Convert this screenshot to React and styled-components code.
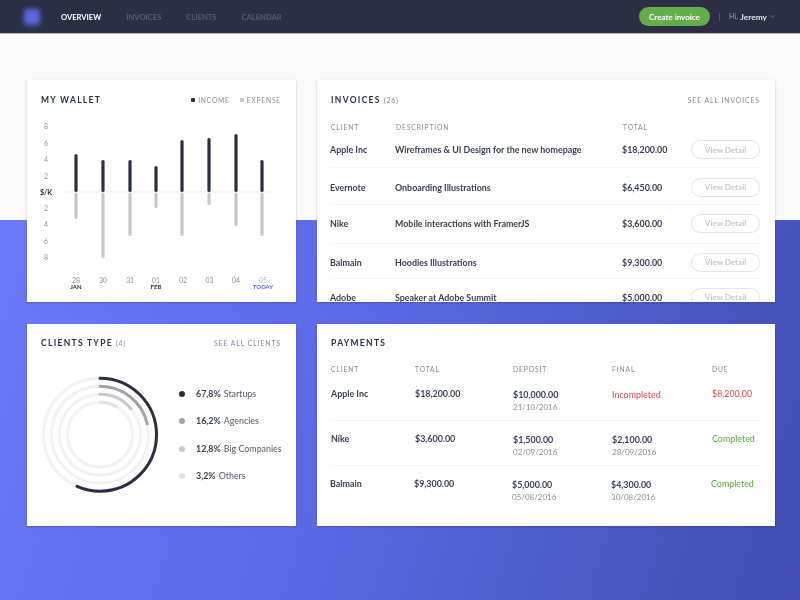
import React from 'react';
import styled, { createGlobalStyle } from 'styled-components';
import { ChevronDown } from 'lucide-react';

const GlobalStyle = createGlobalStyle`
  html, body {
    margin: 0;
    padding: 0;
    width: 800px;
    height: 600px;
    overflow: hidden;
    font-family: 'Lato', 'Liberation Sans', sans-serif;
    color: #2a2f45;
  }
`;

const Page = styled.div`
  width: 800px;
  height: 600px;
  filter: blur(0.3px);
  background:
    linear-gradient(#fafafa, #fafafa) 0 0 / 100% 220px no-repeat,
    linear-gradient(108deg, #6e7cff 0%, #5a68e2 50%, #414db0 100%);
`;

const Header = styled.header`
  height: 33px;
  background: #2a2f45;
  border-bottom: 1px solid #b4b5bd;
  display: flex;
  align-items: center;
  padding: 0 24px 0 22px;
`;

const Logo = styled.div`
  width: 16px;
  height: 16px;
  margin: 0 21px 0 2px;
  border-radius: 3px;
  background: #5a68e0;
  filter: blur(2.5px);
`;

const Nav = styled.nav`
  display: flex;
  gap: 25px;
`;

const NavLink = styled.span`
  font-size: 7.6px;
  font-weight: 700;
  color: ${(p) => (p.$active ? '#ffffff' : '#585c70')};
`;

const HeaderRight = styled.div`
  margin-left: auto;
  display: flex;
  align-items: center;
`;

const CreateButton = styled.div`
  width: 71px;
  height: 19px;
  border-radius: 10px;
  background: #65ad4b;
  color: #fff;
  font-size: 8px;
  font-weight: 700;
  display: flex;
  align-items: center;
  justify-content: center;
`;

const Divider = styled.div`
  width: 1px;
  height: 8px;
  background: #50546a;
  margin: 0 9px;
`;

const Greeting = styled.span`
  font-size: 7.2px;
  color: #a4a6b2;
  display: flex;
  align-items: center;
  strong {
    color: #e4e5ea;
    font-weight: 700;
    font-size: 8.4px;
    margin-left: 2.5px;
  }
  svg {
    margin-left: 2px;
  }
`;

const Board = styled.main`
  display: grid;
  grid-template-columns: 269px 458px;
  grid-template-rows: 222px 202px;
  gap: 21.5px 21px;
  padding: 46px 0 0 27px;
`;

const Card = styled.section`
  background: #fff;
  box-shadow: 0 1px 2px rgba(30, 35, 70, 0.28);
  overflow: hidden;
  display: flex;
  flex-direction: column;
  padding: ${(p) => (p.$flush ? '0' : '0 15px 0 14px')};
`;

const CardHead = styled.div`
  height: 39px;
  flex: none;
  display: flex;
  align-items: center;
  justify-content: space-between;
  padding: ${(p) => (p.$inset ? '0 15px 0 14px' : '0')};
`;

const Title = styled.h2`
  margin: 0;
  font-size: 8.5px;
  font-weight: 700;
  letter-spacing: 1.3px;
  color: #2a2f45;
  small {
    font-size: 7px;
    font-weight: 400;
    color: #85879a;
    margin-left: 3px;
    letter-spacing: 0.8px;
  }
`;

const HeadLink = styled.span`
  font-size: 6.7px;
  letter-spacing: 1px;
  color: #85879a;
`;

const Legend = styled.div`
  display: flex;
  gap: 10px;
`;

const LegendItem = styled.span`
  font-size: 6.7px;
  letter-spacing: 0.8px;
  color: #8e8f9e;
  display: flex;
  align-items: center;
  gap: 3px;
  &::before {
    content: '';
    width: 4px;
    height: 4px;
    border-radius: 1px;
    background: ${(p) => p.$color};
  }
`;

const ChartSvg = styled.svg`
  display: block;
  margin: 0 -15px 0 -14px;
  flex: none;
`;

const AxisText = styled.text`
  font-size: 7px;
  fill: #8e8f9e;
  text-anchor: middle;
  dominant-baseline: central;
`;

const AxisStrong = styled(AxisText)`
  font-weight: 700;
  font-size: ${(p) => p.$size || 6}px;
  fill: ${(p) => p.$color || '#2a2f45'};
`;

const InvoiceTable = styled.div`
  padding: 0 15px 0 13px;
`;

const invoiceColumns = '65px 227px 69px 1fr';
const paymentColumns = '84px 98px 99px 100px 1fr';

const HeadRow = styled.div`
  display: grid;
  grid-template-columns: ${(p) => p.$cols};
  height: ${(p) => p.$h}px;
  align-items: center;
`;

const ColLabel = styled.span`
  font-size: 6.7px;
  letter-spacing: 0.9px;
  color: #85879a;
  padding-left: 1px;
`;

const InvoiceRow = styled.div`
  display: grid;
  grid-template-columns: ${invoiceColumns};
  align-items: center;
  height: ${(p) => p.$h}px;
  padding-top: ${(p) => Math.max(p.$nudge, 0)}px;
  padding-bottom: ${(p) => Math.max(-p.$nudge, 0)}px;
  border-bottom: 1px solid #f5f5f6;
  box-sizing: border-box;
  &:last-child {
    border-bottom: none;
  }
`;

const Cell = styled.span`
  font-size: 8.9px;
  font-weight: 700;
  color: #3a3e54;
  white-space: nowrap;
`;

const ViewButton = styled.div`
  width: 69px;
  height: 19px;
  justify-self: end;
  border: 1px solid #e4e4e8;
  border-radius: 10px;
  box-sizing: border-box;
  color: #c6c7ce;
  font-size: 8px;
  font-weight: 700;
  display: flex;
  align-items: center;
  justify-content: center;
`;

const ClientsBody = styled.div`
  display: flex;
  align-items: center;
  margin-top: 10px;
`;

const RingSvg = styled.svg`
  display: block;
  flex: none;
  margin-left: -14px;
`;

const ClientList = styled.ul`
  list-style: none;
  margin: 1px 0 0 8px;
  padding: 0;
  display: flex;
  flex-direction: column;
  gap: 17.4px;
`;

const ClientItem = styled.li`
  font-size: 8.9px;
  line-height: 10px;
  color: #55586c;
  display: flex;
  align-items: center;
  white-space: nowrap;
  &::before {
    content: '';
    width: 6px;
    height: 6px;
    border-radius: 50%;
    background: ${(p) => p.$color};
    margin-right: 11px;
  }
  b {
    font-weight: 700;
    color: #3a3e54;
    margin-right: 3px;
  }
`;

const PaymentTable = styled.div`
  padding: 0 14px;
  ${ColLabel} {
    padding-left: 0;
  }
`;

const PaymentRow = styled.div`
  display: grid;
  grid-template-columns: ${paymentColumns};
  height: ${(p) => p.$h}px;
  padding-top: ${(p) => p.$top}px;
  margin-left: ${(p) => (p.$shift ? '-1px' : '0')};
  box-sizing: border-box;
  border-bottom: ${(p) => (p.$line ? '1px solid #f5f5f6' : 'none')};
`;

const Stack = styled.div`
  display: flex;
  flex-direction: column;
  gap: 2px;
  margin-top: 1px;
`;

const DateText = styled.span`
  font-size: 8px;
  color: #8e8f9e;
`;

const Status = styled(Cell)`
  font-weight: 500;
  color: ${(p) => (p.$ok ? '#65ad4b' : '#e8585a')};
  margin-top: ${(p) => (p.$down ? '1px' : '0')};
`;

const INCOME = [154, 160, 160, 166, 140, 138, 134, 160];
const EXPENSE = [219, 258, 236, 208, 236, 205, 226, 236];
const BAR_X = [76, 103, 130, 156, 182, 209, 236, 262];
const Y_TICKS = [
  ['8', 126], ['6', 143], ['4', 159], ['2', 176], ['2', 208], ['4', 224], ['6', 241], ['8', 257],
];
const DAYS = [
  ['28', 76, 'JAN'], ['30', 103], ['31', 130], ['01', 156, 'FEB'],
  ['02', 183], ['03', 209.5], ['04', 236], ['05', 263, 'TODAY'],
];

function WalletChart() {
  const ox = 27;
  const oy = 119;
  return (
    <ChartSvg width="269" height="183" viewBox={`${ox} ${oy} 269 183`}>
      <line x1="63" x2="275" y1="192" y2="192" stroke="#f3f3f4" strokeWidth="1" />
      {Y_TICKS.map(([t, y]) => (
        <AxisText key={`${t}-${y}`} x="46" y={y}>{t}</AxisText>
      ))}
      <AxisStrong x="46" y="192" $size={7}>$/K</AxisStrong>
      {BAR_X.map((x, i) => (
        <g key={x}>
          <line x1={x} x2={x} y1={INCOME[i] + 1.5} y2="190.5" stroke="#2a2f45" strokeWidth="3.2" strokeLinecap="round" />
          <line x1={x} x2={x} y1="194" y2={EXPENSE[i] - 1.5} stroke="#c8c8cc" strokeWidth="3.2" strokeLinecap="round" />
        </g>
      ))}
      {DAYS.map(([d, x, sub]) => (
        <g key={d}>
          <AxisText x={x} y="279.5" style={d === '05' ? { fill: '#b4bcf4' } : undefined}>{d}</AxisText>
          {sub && <AxisStrong x={x} y="286.5" $color={sub === 'TODAY' ? '#5a68e0' : undefined}>{sub}</AxisStrong>}
        </g>
      ))}
    </ChartSvg>
  );
}

const RINGS = [
  { r: 56.5, deg: 204, color: '#2a2f45' },
  { r: 48.5, deg: 77, color: '#a3a3a8' },
  { r: 40.5, deg: 50, color: '#c8c8d4' },
  { r: 32.5, deg: 30, color: '#e2e2e6' },
];

function ClientsRing() {
  return (
    <RingSvg width="144" height="124" viewBox="27 372 144 124">
      <g transform="rotate(-90 100 433.7)" fill="none" strokeWidth="3">
        {RINGS.map((ring) => (
          <g key={ring.r}>
            <circle cx="100" cy="433.7" r={ring.r} stroke="#f3f3f4" />
            <circle
              cx="100"
              cy="433.7"
              r={ring.r}
              stroke={ring.color}
              strokeLinecap="round"
              pathLength="360"
              strokeDasharray={`${ring.deg} 360`}
            />
          </g>
        ))}
      </g>
    </RingSvg>
  );
}

const INVOICES = [
  ['Apple Inc', 'Wireframes & UI Design for the new homepage', '$18,200.00', 33, -3],
  ['Evernote', 'Onboarding Illustrations', '$6,450.00', 37, 2],
  ['Nike', 'Mobile interactions with FramerJS', '$3,600.00', 39, -2],
  ['Balmain', 'Hoodies Illustrations', '$9,300.00', 35, 2],
  ['Adobe', 'Speaker at Adobe Summit', '$5,000.00', 38, -2],
];

const PAYMENTS = [
  {
    client: 'Apple Inc', total: '$18,200.00', deposit: '$10,000.00', depositDate: '21/10/2016',
    status: 'Incompleted', due: '$8,200.00', h: 46, top: 13, line: true,
  },
  {
    client: 'Nike', total: '$3,600.00', deposit: '$1,500.00', depositDate: '02/09/2016',
    final: '$2,100.00', finalDate: '28/09/2016', due: 'Completed', ok: true, h: 45, top: 12, line: true,
  },
  {
    client: 'Balmain', total: '$9,300.00', deposit: '$5,000.00', depositDate: '05/08/2016',
    final: '$4,300.00', finalDate: '30/08/2016', due: 'Completed', ok: true, h: 45, top: 12, shift: true,
  },
];

export default function App() {
  return (
    <Page>
      <GlobalStyle />
      <Header>
        <Logo />
        <Nav>
          <NavLink $active>OVERVIEW</NavLink>
          <NavLink>INVOICES</NavLink>
          <NavLink>CLIENTS</NavLink>
          <NavLink>CALENDAR</NavLink>
        </Nav>
        <HeaderRight>
          <CreateButton>Create invoice</CreateButton>
          <Divider />
          <Greeting>
            Hi, <strong>Jeremy</strong>
            <ChevronDown size={7} color="#8e909f" />
          </Greeting>
        </HeaderRight>
      </Header>
      <Board>
        <Card>
          <CardHead>
            <Title>MY WALLET</Title>
            <Legend>
              <LegendItem $color="#2a2f45">INCOME</LegendItem>
              <LegendItem $color="#c8c8cc">EXPENSE</LegendItem>
            </Legend>
          </CardHead>
          <WalletChart />
        </Card>
        <Card $flush>
          <CardHead $inset>
            <Title>INVOICES<small>(26)</small></Title>
            <HeadLink>SEE ALL INVOICES</HeadLink>
          </CardHead>
          <InvoiceTable>
            <HeadRow $cols={invoiceColumns} $h={16}>
              <ColLabel>CLIENT</ColLabel>
              <ColLabel>DESCRIPTION</ColLabel>
              <ColLabel>TOTAL</ColLabel>
            </HeadRow>
            {INVOICES.map(([client, description, total, h, nudge]) => (
              <InvoiceRow key={client} $h={h} $nudge={nudge}>
                <Cell>{client}</Cell>
                <Cell>{description}</Cell>
                <Cell>{total}</Cell>
                <ViewButton>View Detail</ViewButton>
              </InvoiceRow>
            ))}
          </InvoiceTable>
        </Card>
        <Card>
          <CardHead>
            <Title>CLIENTS TYPE<small>(4)</small></Title>
            <HeadLink>SEE ALL CLIENTS</HeadLink>
          </CardHead>
          <ClientsBody>
            <ClientsRing />
            <ClientList>
              <ClientItem $color="#2a2f45"><b>67,8%</b> Startups</ClientItem>
              <ClientItem $color="#a3a3a8"><b>16,2%</b> Agencies</ClientItem>
              <ClientItem $color="#c8c8d4"><b>12,8%</b> Big Companies</ClientItem>
              <ClientItem $color="#e2e2e6"><b>3,2%</b> Others</ClientItem>
            </ClientList>
          </ClientsBody>
        </Card>
        <Card $flush>
          <CardHead $inset>
            <Title>PAYMENTS</Title>
          </CardHead>
          <PaymentTable>
            <HeadRow $cols={paymentColumns} $h={12}>
              <ColLabel>CLIENT</ColLabel>
              <ColLabel>TOTAL</ColLabel>
              <ColLabel>DEPOSIT</ColLabel>
              <ColLabel>FINAL</ColLabel>
              <ColLabel>DUE</ColLabel>
            </HeadRow>
            {PAYMENTS.map((p) => (
              <PaymentRow key={p.client} $h={p.h} $top={p.top} $line={p.line} $shift={p.shift}>
                <Cell>{p.client}</Cell>
                <Cell>{p.total}</Cell>
                <Stack>
                  <Cell>{p.deposit}</Cell>
                  <DateText>{p.depositDate}</DateText>
                </Stack>
                {p.final ? (
                  <Stack>
                    <Cell>{p.final}</Cell>
                    <DateText>{p.finalDate}</DateText>
                  </Stack>
                ) : (
                  <Status $down>{p.status}</Status>
                )}
                <Status $ok={p.ok}>{p.due}</Status>
              </PaymentRow>
            ))}
          </PaymentTable>
        </Card>
      </Board>
    </Page>
  );
}
